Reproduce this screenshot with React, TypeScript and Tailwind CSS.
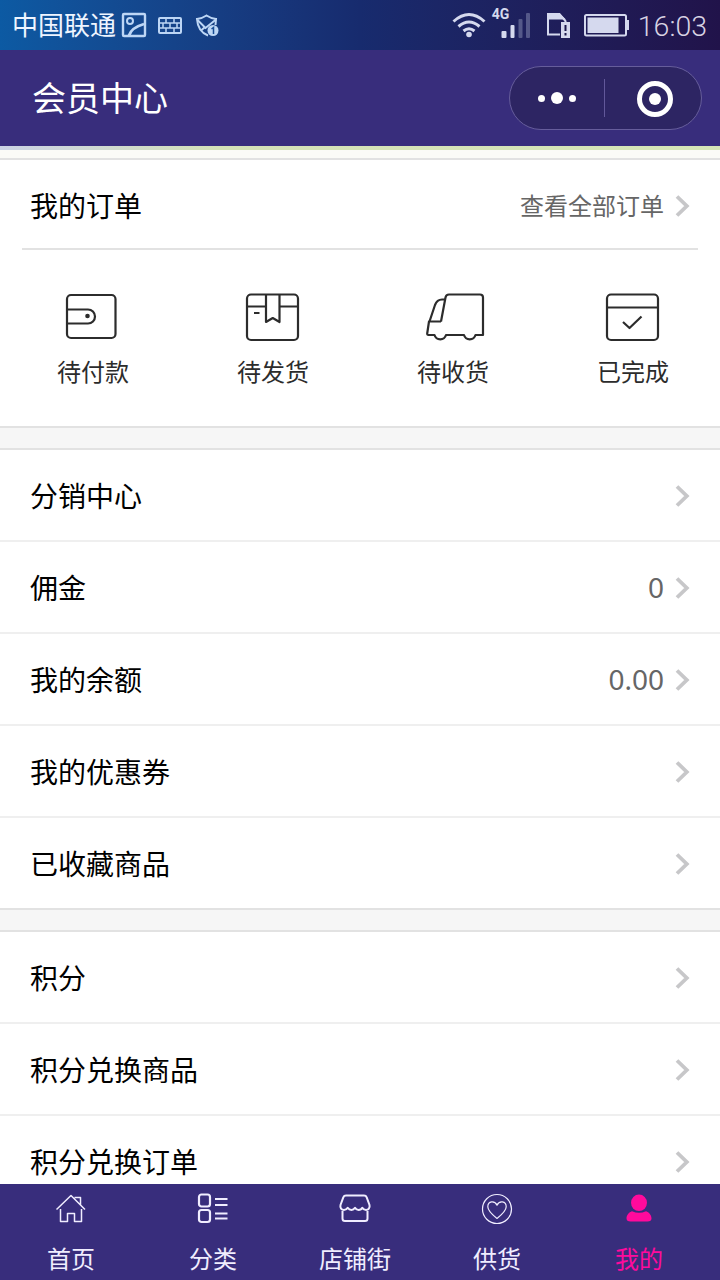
import type { ReactNode } from "react";

interface Row {
  label: string;
  value?: string;
}

interface IconItem {
  label: string;
  icon: ReactNode;
}

const accountRows: Row[] = [
  { label: "分销中心" },
  { label: "佣金", value: "0" },
  { label: "我的余额", value: "0.00" },
  { label: "我的优惠券" },
  { label: "已收藏商品" },
];

const pointRows: Row[] = [
  { label: "积分" },
  { label: "积分兑换商品" },
  { label: "积分兑换订单" },
];

const orderItems: IconItem[] = [
  {
    label: "待付款",
    icon: (
      <>
        <rect x="6" y="5" width="48.500" height="43" rx="4" />
        <path d="M6 19.500h21a7 7 0 0 1 0 14H6" />
        <circle cx="26.500" cy="26" r="2.300" fill="currentColor" stroke="none" />
      </>
    ),
  },
  {
    label: "待发货",
    icon: (
      <>
        <rect x="6" y="4.500" width="51" height="45.500" rx="4" />
        <path d="M6 16.500h19M38.500 16.500h18.500M25 4.500v27.500l6.750-4 6.750 4V4.500M13 23h5.500" />
      </>
    ),
  },
  {
    label: "待收货",
    icon: (
      <>
        <path d="M20 31.500L24.500 7.500q.5-3 3.500-3h31q3 0 3 3v37.500h-7.500a6 6 0 0 1-11.500 0H25a6 6 0 0 1-11.500 0H7.500q-1.500 0-1.300-1.500l1.800-12H20" />
        <path d="M8.500 31.500l5.500-16.500q2-5.500 7-5.500h3" />
      </>
    ),
  },
  {
    label: "已完成",
    icon: (
      <>
        <rect x="6" y="4.500" width="51" height="45.500" rx="4" />
        <path d="M6 17.500h51" />
        <path d="M22 32l6.500 6L40.500 26.500" />
      </>
    ),
  },
];

const tabs: IconItem[] = [
  {
    label: "首页",
    icon: (
      <g strokeWidth="1.500">
        <path d="M2.500 17.500L17 3.500l14 14M20.500 5.500h6v7.500" />
        <path d="M6.500 17v12.500h7v-8h7v8h7V17" />
      </g>
    ),
  },
  {
    label: "分类",
    icon: (
      <g strokeWidth="2.200">
        <rect x="3" y="2.500" width="11" height="12" rx="2.500" />
        <rect x="3" y="18" width="11" height="12" rx="2.500" />
        <path d="M19 7h12.500M19 13h12.500M19 21.500h12.500M19 26.500h12.500" />
      </g>
    ),
  },
  {
    label: "店铺街",
    icon: (
      <g strokeWidth="2">
        <path d="M8 3.500h18q2 0 2.700 1.800L31.500 13c.7 3-1.200 5-3.500 5-2 0-3-1-3.700-2.200C23.500 17.500 22 18 20.500 18s-2.800-1-3.500-2.200C16.200 17 15 18 13.500 18S10.500 17 9.700 15.800C9 17 8 18 6 18c-2.500 0-4.200-2-3.500-5l2.800-7.700Q6 3.500 8 3.500Z" />
        <path d="M4.500 19v7.500q0 2.500 2.500 2.500h20q2.500 0 2.500-2.500V19" />
      </g>
    ),
  },
  {
    label: "供货",
    icon: (
      <g strokeWidth="1.200">
        <circle cx="17" cy="17" r="14.500" />
        <path d="M17 26.500C12 22.500 7.800 19 7.800 14.800c0-6 7-6.500 9.200-1.600 2.200-4.900 9.200-4.400 9.200 1.600 0 4.200-4.200 7.700-9.200 11.700Z" />
      </g>
    ),
  },
  {
    label: "我的",
    icon: (
      <g fill="currentColor" stroke="none">
        <ellipse cx="17" cy="10.800" rx="8" ry="8.300" />
        <path d="M10 19.300q7 3 14 0c3 1 5.500 4 5.500 7q0 3.200-4 3.200H8.500q-4 0-4-3.200c0-3 2.500-6 5.500-7Z" />
      </g>
    ),
  },
];

function StatusBar() {
  return (
    <div className="flex h-[50px] shrink-0 items-center justify-between bg-linear-to-r from-[#0c5aa3] via-[#172b6e] via-50% to-[#21134a] pl-3 pr-[13px] text-[#d5d9ee]">
      <div className="flex items-center">
        <span className="pb-0.5 text-[26px] leading-[46px] text-[#eef5ff]">中国联通</span>
        <svg className="ml-1 h-7 w-[104px]" viewBox="120 11 104 28" fill="none" stroke="#bdd6f5" strokeWidth="2">
          <rect x="123" y="14" width="22" height="22" rx="1" strokeWidth="2.400" />
          <circle cx="130" cy="21" r="3" />
          <path d="M129 35.500C131 29 137 26 144 24" strokeWidth="2.800" />
          <rect x="159" y="18" width="22" height="15" rx="1" />
          <path d="M159 23h22M159 28h22M166 18v5M174 18v5M163 23v5M170 23v5M177 23v5M166 28v5M174 28v5" strokeWidth="1.500" />
          <path d="M208 35.500c-6.500-2.500-10.500-8.500-11-16.500q5-.5 9.500-3.500 4.500 3 9.500 3.500l-.5 6" />
          <path d="M197.500 20l8 8 10.500-8.500M201 30.500l4-3.500" />
          <circle cx="213" cy="30.500" r="5.500" fill="#bdd6f5" stroke="none" />
          <path d="M211.500 29l2-1.500V34" stroke="#174b94" strokeWidth="1.500" />
        </svg>
      </div>
      <div className="flex items-center">
        <svg className="h-[34px] w-9" viewBox="450 8 36 34" fill="none" stroke="currentColor" strokeWidth="3">
          <path d="M453.500 21.500q15.500-14 31 0M458.500 26.500q10.500-9 21 0M463.500 31q5.500-4.500 11 0" />
          <circle cx="469" cy="34.500" r="2.800" fill="currentColor" stroke="none" />
        </svg>
        <div className="ml-1.5 flex h-[34px] w-[41px] items-start">
          <span className="-mr-2.5 font-[Roboto] text-sm leading-[13px] font-bold">4G</span>
          <svg className="h-[34px] w-[31px]" viewBox="500 8 31 34" fill="currentColor">
            <rect x="502.500" y="31" width="5" height="7" rx="1" />
            <rect x="511.500" y="25" width="4" height="13" rx="1" />
            <rect x="519.500" y="19" width="4" height="19" rx="1" opacity=".3" />
            <rect x="527" y="13" width="4" height="25" rx="1" opacity=".3" />
          </svg>
        </div>
        <svg className="ml-[11px] h-[34px] w-[86px]" viewBox="544 8 86 34" fill="none" stroke="currentColor">
          <path d="M548 17v17.500h12M548 14h11.500l6 7v2" strokeWidth="2" />
          <path d="M547 13h12l7 6.500h-19Z" fill="currentColor" stroke="none" />
          <path d="M561 22h9v16h-9Z" fill="currentColor" stroke="none" />
          <path d="M565.500 25v6M565.500 33v2.500" stroke="#1c184d" strokeWidth="2" />
          <rect x="585" y="15" width="41" height="20.500" rx="1.500" strokeWidth="2" />
          <rect x="587.500" y="17.500" width="31" height="15.500" fill="currentColor" stroke="none" />
          <path d="M627 20h2v10h-2Z" fill="currentColor" stroke="none" />
        </svg>
        <span className="ml-2 pt-1 font-[Roboto] text-[28.500px] leading-[46px] font-light text-[#d8d3e3]">16:03</span>
      </div>
    </div>
  );
}

function Header() {
  return (
    <header className="flex h-24 shrink-0 items-center justify-between bg-[#382d7c] pl-8 pr-[18px] text-white">
      <h1 className="pb-0.5 text-[34px] leading-[94px]">会员中心</h1>
      <div className="flex h-16 w-[193px] items-center rounded-full border border-[#665d9b] bg-[#2d2563]">
        <div className="flex flex-1 items-center justify-center gap-1.5 pl-px">
          <i className="h-[7px] w-[7px] rounded-full bg-white" />
          <i className="h-3 w-3 rounded-full bg-white" />
          <i className="h-[7px] w-[7px] rounded-full bg-white" />
        </div>
        <div className="h-[38px] w-px bg-[#62589a]" />
        <div className="flex flex-1 items-center justify-center pt-0.5 pl-1">
          <div className="flex h-9 w-9 items-center justify-center rounded-full border-5 border-white">
            <i className="h-3 w-3 rounded-full bg-white" />
          </div>
        </div>
      </div>
    </header>
  );
}

function Chevron() {
  return (
    <svg className="mt-0.5 ml-2.5 h-6 w-4" viewBox="0 0 16 24" fill="none" stroke="#c7c7c9" strokeWidth="3.800">
      <path d="M3 2.500L12.800 12 3 21.500" />
    </svg>
  );
}

function List({ rows }: { rows: Row[] }) {
  return (
    <div className="bg-white">
      {rows.map((row) => (
        <div key={row.label} className="flex h-[92px] items-center border-b-2 border-[#efefef] px-[30px] last:border-[#e2e2e2]">
          <span className="flex-1 text-[28px] text-black">{row.label}</span>
          {row.value && <span className="font-['Noto_Sans'] text-[28px] text-[#666]">{row.value}</span>}
          <Chevron />
        </div>
      ))}
    </div>
  );
}

function TabBar() {
  return (
    <nav className="flex h-24 shrink-0 bg-[#382d7c] pr-2.5 text-[#f0edff]">
      {tabs.map((tab) => (
        <a key={tab.label} className="flex flex-1 flex-col items-center pt-2 last:text-[#ff0a9c]">
          <svg className="h-[34px] w-[34px]" viewBox="0 0 34 34" fill="none" stroke="currentColor" strokeLinejoin="round">
            {tab.icon}
          </svg>
          <span className="mt-3.5 text-2xl leading-9">{tab.label}</span>
        </a>
      ))}
    </nav>
  );
}

export default function App() {
  return (
    <div className="flex h-[1280px] w-[720px] flex-col overflow-hidden bg-white font-['Noto_Sans_CJK_SC',sans-serif]">
      <StatusBar />
      <Header />
      <main className="min-h-0 flex-1 overflow-hidden bg-[#f6f6f6]">
        <div className="h-1 bg-linear-to-r from-[#cbd2e5] via-[#d5e2b8] via-30% to-[#d6e5b8]" />
        <div className="h-2 bg-[#fbfbf7]" />
        <section className="border-y-2 border-[#e2e2e2] bg-white">
          <div className="mx-[22px] flex h-[90px] items-center border-b-2 border-[#e2e2e2] px-2 pt-0.5">
            <span className="flex-1 text-[28px] text-black">我的订单</span>
            <span className="text-2xl text-[#666]">查看全部订单</span>
            <Chevron />
          </div>
          <div className="grid h-[176px] grid-cols-4 pt-10">
            {orderItems.map((item) => (
              <div key={item.label} className="flex flex-col items-center text-[#2c2c2c]">
                <svg className="ml-1.5 h-[54px] w-16" viewBox="0 0 64 54" fill="none" stroke="currentColor" strokeWidth="2.200" strokeLinejoin="round">
                  {item.icon}
                </svg>
                <span className="mt-[9px] ml-1.5 text-2xl leading-9">{item.label}</span>
              </div>
            ))}
          </div>
        </section>
        <div className="h-5" />
        <section className="border-t-2 border-[#e2e2e2]">
          <List rows={accountRows} />
        </section>
        <div className="h-5" />
        <section className="border-t-2 border-[#e2e2e2]">
          <List rows={pointRows} />
        </section>
      </main>
      <TabBar />
    </div>
  );
}
